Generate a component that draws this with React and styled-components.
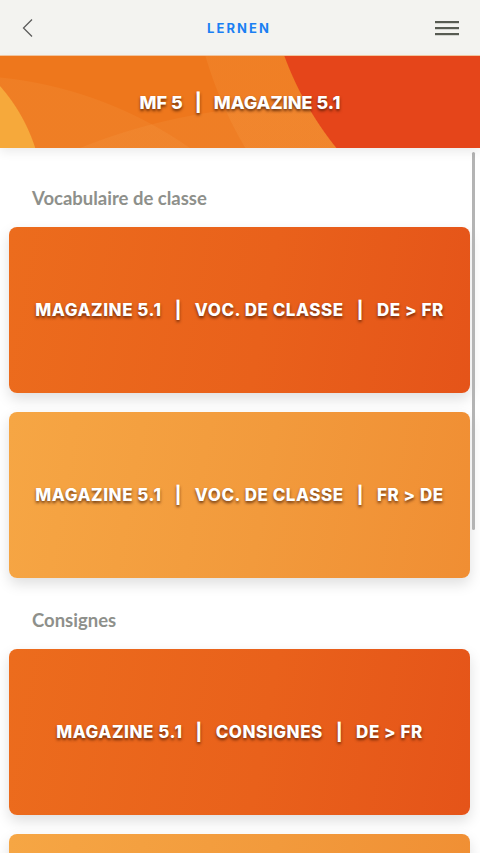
import React from "react";
import styled, { createGlobalStyle } from "styled-components";

const Global = createGlobalStyle`
  html, body { margin: 0; padding: 0; background: #ffffff; overflow: hidden; }
  body { font-family: "Inter", "Liberation Sans", sans-serif; -webkit-font-smoothing: antialiased; }
  * { box-sizing: border-box; }
`;

const Screen = styled.div`
  width: 480px;
  height: 853px;
  overflow: hidden;
  position: relative;
  background: #ffffff;
  display: flex;
  flex-direction: column;
`;

const TopBar = styled.header`
  height: 56px;
  flex: none;
  background: #f3f3f0;
  border-bottom: 1px solid #f4c7a0;
  display: flex;
  align-items: center;
  justify-content: space-between;
  padding: 0 19px 0 14px;
`;

const IconButton = styled.button`
  width: 28px;
  height: 28px;
  padding: 0;
  border: 0;
  background: transparent;
  display: flex;
  align-items: center;
  justify-content: center;
`;

const BarTitle = styled.h1`
  margin: 0 0 0 3px;
  font-family: "Inter", "Liberation Sans", sans-serif;
  font-weight: 700;
  font-size: 13px;
  letter-spacing: 2.1px;
  color: #1b7ff3;
`;

const Banner = styled.div`
  height: 92px;
  flex: none;
  display: flex;
  align-items: center;
  justify-content: center;
  background:
    radial-gradient(circle at 590px -112px, #e5451a 0 325px, transparent 326px),
    radial-gradient(circle at 590px -112px, rgba(255,200,120,0.10) 0 400px, transparent 401px),
    radial-gradient(circle at -130px 145px, #f6a93b 0 173px, transparent 174px),
    radial-gradient(circle at 300px 640px, rgba(255,210,140,0.08) 0 590px, transparent 591px),
    radial-gradient(circle at -40px 420px, rgba(255,220,150,0.07) 0 400px, transparent 401px),
    #ee771c;
  box-shadow: 0 4px 10px rgba(0,0,0,0.08);
  position: relative;
  z-index: 1;
`;

const BannerText = styled.div`
  color: #ffffff;
  font-family: "Inter", "Liberation Sans", sans-serif;
  font-weight: 800;
  font-size: 18px;
  letter-spacing: 0;
  text-shadow: 0 2px 3px rgba(60,20,0,0.75);
  display: flex;
  align-items: center;
`;

const CardText = styled.div`
  color: #ffffff;
  font-family: "Inter", "Liberation Sans", sans-serif;
  font-weight: 800;
  font-size: 17px;
  letter-spacing: 0.55px;
  text-shadow: 0 2px 3px rgba(60,20,0,0.7);
  display: flex;
  align-items: center;
  white-space: nowrap;
`;

const Sep = styled.span`
  margin: 0 ${(p) => p.$gap}px;
  font-weight: 800;
`;

const Content = styled.main`
  flex: 1;
  position: relative;
  padding: 38px 10px 0 9px;
  display: flex;
  flex-direction: column;
  gap: 30px;
`;

const Section = styled.section`
  display: flex;
  flex-direction: column;
`;

const SectionTitle = styled.h2`
  margin: 0 0 17px 23px;
  font-family: "Lato", "Open Sans", sans-serif;
  font-weight: 700;
  font-size: 18.5px;
  line-height: 24px;
  color: #8e908b;
`;

const CardList = styled.div`
  display: flex;
  flex-direction: column;
  gap: 19px;
`;

const Card = styled.div`
  height: 166px;
  border-radius: 8px;
  display: flex;
  align-items: center;
  justify-content: center;
  background: ${(p) =>
    p.$light
      ? "linear-gradient(100deg, #f6a644 0%, #f29a3c 55%, #f08e33 100%)"
      : "linear-gradient(100deg, #ec6c1d 0%, #e9611b 55%, #e55419 100%)"};
  box-shadow: 0 6px 14px rgba(0,0,0,0.13);
`;

const ScrollIndicator = styled.div`
  position: absolute;
  right: 5px;
  top: 4px;
  width: 3px;
  height: 378px;
  border-radius: 2px;
  background: #b4b4b4;
`;

const Back = () => (
  <svg width="14" height="20" viewBox="0 0 14 20">
    <path d="M11 1.5 L2.5 10 L11 18.5" fill="none" stroke="#5c5c5c" strokeWidth="1.3" />
  </svg>
);

const Menu = () => (
  <svg width="26" height="18" viewBox="0 0 26 18">
    <rect x="1" y="2" width="24" height="2.2" fill="#575b52" />
    <rect x="1" y="8" width="24" height="2.2" fill="#575b52" />
    <rect x="1" y="14" width="24" height="2.2" fill="#575b52" />
  </svg>
);

const Label = ({ parts, Comp, gap }) => (
  <Comp>
    {parts.map((p, i) => (
      <React.Fragment key={i}>
        {i > 0 && <Sep $gap={gap}>|</Sep>}
        <span>{p}</span>
      </React.Fragment>
    ))}
  </Comp>
);

const sections = [
  {
    title: "Vocabulaire de classe",
    cards: [
      { parts: ["MAGAZINE 5.1", "VOC. DE CLASSE", "DE > FR"], light: false },
      { parts: ["MAGAZINE 5.1", "VOC. DE CLASSE", "FR > DE"], light: true },
    ],
  },
  {
    title: "Consignes",
    cards: [
      { parts: ["MAGAZINE 5.1", "CONSIGNES", "DE > FR"], light: false },
      { parts: ["MAGAZINE 5.1", "CONSIGNES", "FR > DE"], light: true },
    ],
  },
];

export default function App() {
  return (
    <>
      <Global />
      <Screen>
        <TopBar>
          <IconButton aria-label="Zurück"><Back /></IconButton>
          <BarTitle>LERNEN</BarTitle>
          <IconButton aria-label="Menü"><Menu /></IconButton>
        </TopBar>
        <Banner>
          <Label parts={["MF 5", "MAGAZINE 5.1"]} Comp={BannerText} gap={12} />
        </Banner>
        <Content>
          <ScrollIndicator />
          {sections.map((s) => (
            <Section key={s.title}>
              <SectionTitle>{s.title}</SectionTitle>
              <CardList>
                {s.cards.map((c, i) => (
                  <Card key={i} $light={c.light}>
                    <Label parts={c.parts} Comp={CardText} gap={13} />
                  </Card>
                ))}
              </CardList>
            </Section>
          ))}
        </Content>
      </Screen>
    </>
  );
}
